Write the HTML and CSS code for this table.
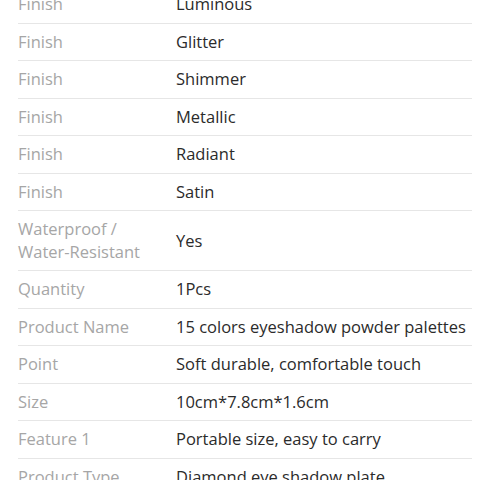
FILE: index.html
```html
<!DOCTYPE html>
<html>
<head>
<meta charset="utf-8">
<link rel="stylesheet" href="styles.css">
</head>
<body>
<div class="specs">
  <div class="row"><div class="label">Finish</div><div class="value">Luminous</div></div>
  <div class="row"><div class="label">Finish</div><div class="value">Glitter</div></div>
  <div class="row"><div class="label">Finish</div><div class="value">Shimmer</div></div>
  <div class="row"><div class="label">Finish</div><div class="value">Metallic</div></div>
  <div class="row"><div class="label">Finish</div><div class="value">Radiant</div></div>
  <div class="row"><div class="label">Finish</div><div class="value">Satin</div></div>
  <div class="row"><div class="label">Waterproof / Water-Resistant</div><div class="value">Yes</div></div>
  <div class="row"><div class="label">Quantity</div><div class="value">1Pcs</div></div>
  <div class="row"><div class="label">Product Name</div><div class="value">15 colors eyeshadow powder palettes</div></div>
  <div class="row"><div class="label">Point</div><div class="value">Soft durable, comfortable touch</div></div>
  <div class="row"><div class="label">Size</div><div class="value">10cm*7.8cm*1.6cm</div></div>
  <div class="row"><div class="label">Feature 1</div><div class="value">Portable size, easy to carry</div></div>
  <div class="row"><div class="label">Product Type</div><div class="value">Diamond eye shadow plate</div></div>
</div>
</body>
</html>
```
FILE: styles.css
```css
html, body {
  margin: 0;
  padding: 0;
  background: #ffffff;
}
body {
  font-family: "Open Sans", "Noto Sans", sans-serif;
  font-size: 16.5px;
  line-height: 22.5px;
  overflow: hidden;
}
.specs {
  margin: -13.7px 8px 0 18px;
  display: flex;
  flex-direction: column;
}
.row {
  display: grid;
  grid-template-columns: 158px 1fr;
  align-items: center;
  padding: 7px 0;
  border-bottom: 1px solid #e6e6e6;
}
.label {
  color: #a6a6a6;
  padding-right: 12px;
}
.value {
  color: #2b2b2b;
}
```
